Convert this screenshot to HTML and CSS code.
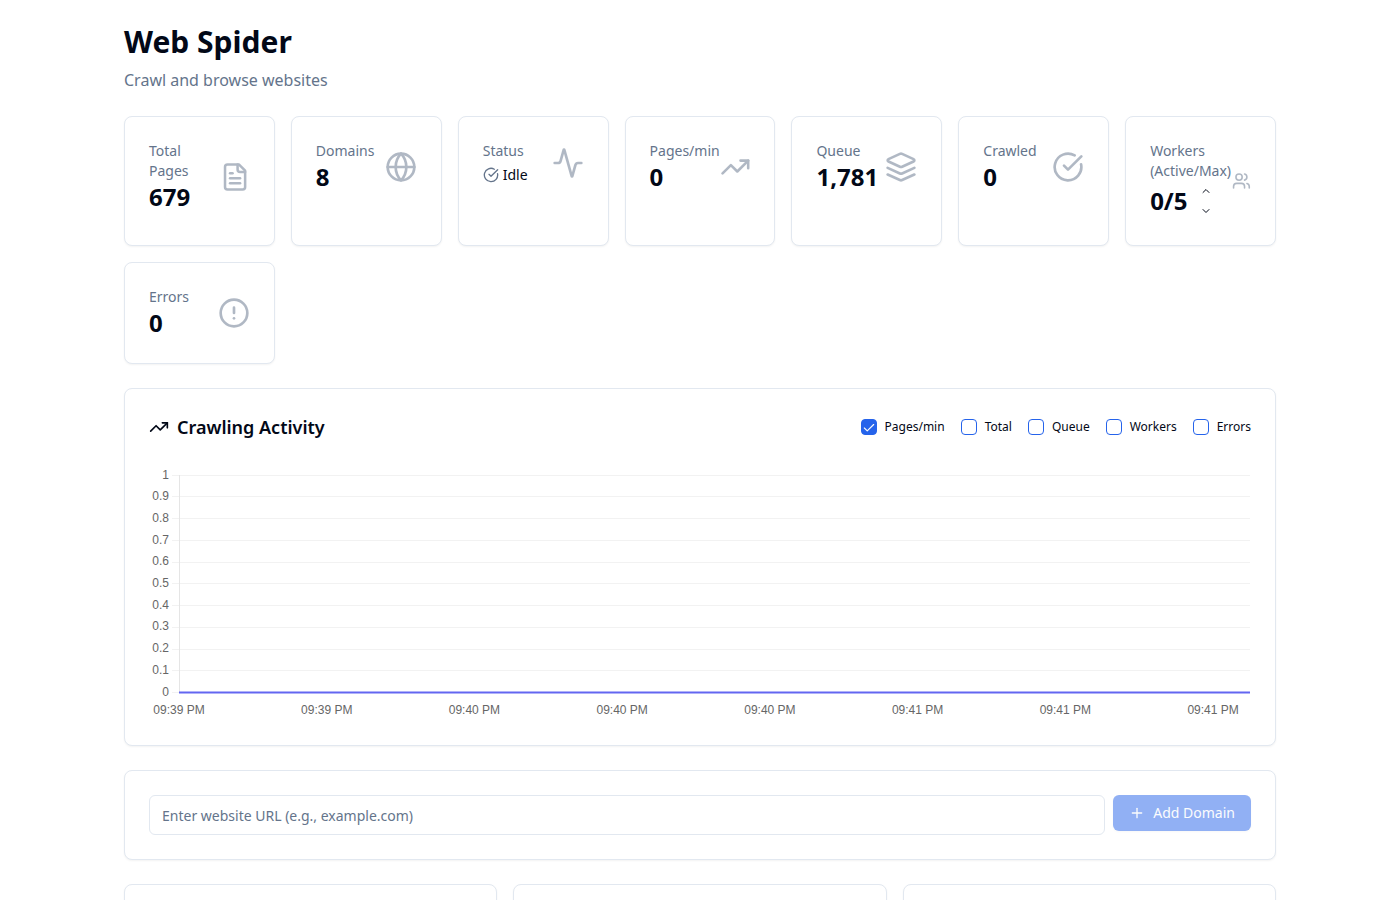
FILE: index.html
```
<!DOCTYPE html>
<html lang="en">
<head>
    <meta charset="UTF-8">
    <meta name="viewport" content="width=device-width, initial-scale=1.0">
    <title>Web Spider</title>
    <link rel="stylesheet" href="styles.css">
</head>
<body>
    <main class="container">
        <h1>Web Spider</h1>
        <p class="subtitle">Crawl and browse websites</p>

        <!-- Stats -->
        <section class="stats">
            <div class="card">
                <div class="stat">
                    <div>
                        <p class="stat-label">Total Pages</p>
                        <p class="stat-value">679</p>
                    </div>
                    <svg class="icon stat-icon" viewBox="0 0 24 24"><path d="M15 2H6a2 2 0 0 0-2 2v16a2 2 0 0 0 2 2h12a2 2 0 0 0 2-2V7Z"/><path d="M14 2v4a2 2 0 0 0 2 2h4"/><path d="M10 9H8"/><path d="M16 13H8"/><path d="M16 17H8"/></svg>
                </div>
            </div>
            <div class="card">
                <div class="stat">
                    <div>
                        <p class="stat-label">Domains</p>
                        <p class="stat-value">8</p>
                    </div>
                    <svg class="icon stat-icon" viewBox="0 0 24 24"><circle cx="12" cy="12" r="10"/><path d="M12 2a14.5 14.5 0 0 0 0 20 14.5 14.5 0 0 0 0-20"/><path d="M2 12h20"/></svg>
                </div>
            </div>
            <div class="card">
                <div class="stat">
                    <div>
                        <p class="stat-label">Status</p>
                        <p class="status">
                            <svg class="icon" viewBox="0 0 24 24"><path d="M21.801 10A10 10 0 1 1 17 3.335"/><path d="m9 11 3 3L22 4"/></svg>
                            Idle
                        </p>
                    </div>
                    <svg class="icon stat-icon" viewBox="0 0 24 24"><path d="M22 12h-2.48a2 2 0 0 0-1.93 1.46l-2.35 8.36a.25.25 0 0 1-.48 0L9.24 2.18a.25.25 0 0 0-.48 0l-2.35 8.36A2 2 0 0 1 4.49 12H2"/></svg>
                </div>
            </div>
            <div class="card">
                <div class="stat">
                    <div>
                        <p class="stat-label">Pages/min</p>
                        <p class="stat-value">0</p>
                    </div>
                    <svg class="icon stat-icon" viewBox="0 0 24 24"><path d="M22 7l-8.5 8.5-5-5L2 17"/><path d="M16 7h6v6"/></svg>
                </div>
            </div>
            <div class="card">
                <div class="stat">
                    <div>
                        <p class="stat-label">Queue</p>
                        <p class="stat-value">1,781</p>
                    </div>
                    <svg class="icon stat-icon" viewBox="0 0 24 24"><path d="m12.83 2.18a2 2 0 0 0-1.66 0L2.6 6.08a1 1 0 0 0 0 1.83l8.58 3.91a2 2 0 0 0 1.66 0l8.58-3.9a1 1 0 0 0 0-1.83Z"/><path d="m22 17.65-9.17 4.16a2 2 0 0 1-1.66 0L2 17.65"/><path d="m22 12.65-9.17 4.16a2 2 0 0 1-1.66 0L2 12.65"/></svg>
                </div>
            </div>
            <div class="card">
                <div class="stat">
                    <div>
                        <p class="stat-label">Crawled</p>
                        <p class="stat-value">0</p>
                    </div>
                    <svg class="icon stat-icon" viewBox="0 0 24 24"><path d="M21.801 10A10 10 0 1 1 17 3.335"/><path d="m9 11 3 3L22 4"/></svg>
                </div>
            </div>
            <div class="card">
                <div class="stat">
                    <div>
                        <p class="stat-label">Workers (Active/Max)</p>
                        <div class="workers">
                            <p class="stat-value">0/5</p>
                            <div class="stepper">
                                <button type="button" aria-label="Increase workers">
                                    <svg class="icon" viewBox="0 0 24 24"><path d="m18 15-6-6-6 6"/></svg>
                                </button>
                                <button type="button" aria-label="Decrease workers">
                                    <svg class="icon" viewBox="0 0 24 24"><path d="m6 9 6 6 6-6"/></svg>
                                </button>
                            </div>
                        </div>
                    </div>
                    <svg class="icon stat-icon" viewBox="0 0 24 24"><path d="M16 21v-2a4 4 0 0 0-4-4H6a4 4 0 0 0-4 4v2"/><circle cx="9" cy="7" r="4"/><path d="M22 21v-2a4 4 0 0 0-3-3.87"/><path d="M16 3.13a4 4 0 0 1 0 7.75"/></svg>
                </div>
            </div>
            <div class="card">
                <div class="stat">
                    <div>
                        <p class="stat-label">Errors</p>
                        <p class="stat-value">0</p>
                    </div>
                    <svg class="icon stat-icon" viewBox="0 0 24 24"><circle cx="12" cy="12" r="10"/><path d="M12 8v4"/><path d="M12 16h.01"/></svg>
                </div>
            </div>
        </section>

        <!-- Activity chart -->
        <section class="card">
            <div class="chart-header">
                <h2>
                    <svg class="icon" viewBox="0 0 24 24"><path d="M22 7l-8.5 8.5-5-5L2 17"/><path d="M16 7h6v6"/></svg>
                    Crawling Activity
                </h2>
                <div class="series">
                    <label><input type="checkbox" checked> Pages/min</label>
                    <label><input type="checkbox"> Total</label>
                    <label><input type="checkbox"> Queue</label>
                    <label><input type="checkbox"> Workers</label>
                    <label><input type="checkbox"> Errors</label>
                </div>
            </div>
            <div class="chart">
                <svg class="plot" role="img" aria-label="Pages per minute">
                    <g id="grid"></g>
                    <rect class="axis" x="0" y="10" width="1" height="217"/>
                    <line class="data" x1="0" y1="227.5" x2="100%" y2="227.5"/>
                    <g id="times"></g>
                </svg>
            </div>
        </section>

        <!-- Add domain -->
        <form class="card add-form">
            <input type="text" aria-label="Website URL" placeholder="Enter website URL (e.g., example.com)">
            <button type="submit" disabled>
                <svg class="icon" viewBox="0 0 24 24"><path d="M5 12h14"/><path d="M12 5v14"/></svg>
                Add Domain
            </button>
        </form>

        <section class="panels">
            <div class="card"></div>
            <div class="card"></div>
            <div class="card"></div>
        </section>
    </main>
    <script src="chart.js"></script>
</body>
</html>
```
FILE: styles.css
```
* {
    box-sizing: border-box;
    margin: 0;
    padding: 0;
}

body {
    font-family: "Noto Sans", sans-serif;
    font-size: 16px;
    line-height: 24px;
    background-color: #fff;
    color: #020817;
}

button,
input {
    font: inherit;
}

.container {
    max-width: 1200px;
    margin: 0 auto;
    padding: 24px;
}

h1 {
    font-size: 30px;
    line-height: 36px;
    font-weight: 700;
    margin-bottom: 8px;
}

.subtitle {
    color: #64748b;
    margin-bottom: 24px;
}

.icon {
    fill: none;
    stroke: currentColor;
    stroke-width: 2;
    stroke-linecap: round;
    stroke-linejoin: round;
}

.card {
    padding: 24px;
    border: 1px solid #e2e8f0;
    border-radius: 8px;
    background-color: #fff;
    box-shadow: 0 1px 2px rgba(0, 0, 0, 0.05);
}

/* Stats */
.stats {
    display: grid;
    grid-template-columns: repeat(7, minmax(0, 1fr));
    gap: 16px;
    margin-bottom: 24px;
}

.stat {
    display: flex;
    align-items: center;
    justify-content: space-between;
}

.stat-label {
    font-size: 14px;
    line-height: 20px;
    color: #64748b;
}

.stat-value {
    font-size: 24px;
    line-height: 32px;
    font-weight: 700;
}

.stat-icon {
    width: 32px;
    height: 32px;
    color: #64748b;
    opacity: 0.5;
}

.status {
    display: flex;
    align-items: center;
    gap: 4px;
    margin-top: 4px;
    font-size: 14px;
    line-height: 20px;
}

.status .icon {
    width: 16px;
    height: 16px;
    color: #64748b;
}

.workers {
    display: flex;
    align-items: center;
    gap: 8px;
}

.stepper {
    display: flex;
    flex-direction: column;
}

.stepper button {
    display: flex;
    align-items: center;
    height: 20px;
    padding: 0 4px;
    border: none;
    background: none;
    color: inherit;
    cursor: pointer;
}

.stepper .icon {
    width: 12px;
    height: 12px;
}

/* Chart */
.chart-header {
    display: flex;
    align-items: center;
    justify-content: space-between;
    margin-bottom: 24px;
}

h2 {
    display: flex;
    align-items: center;
    gap: 8px;
    font-size: 18px;
    line-height: 28px;
    font-weight: 600;
}

h2 .icon {
    width: 20px;
    height: 20px;
}

.series {
    display: flex;
    gap: 16px;
}

.series label {
    display: flex;
    align-items: center;
    gap: 8px;
    font-size: 12px;
    line-height: 16px;
}

.series input {
    appearance: none;
    width: 16px;
    height: 16px;
    border: 1px solid #2563eb;
    border-radius: 4px;
}

.series input:checked {
    background: #2563eb url("data:image/svg+xml,%3Csvg xmlns='http://www.w3.org/2000/svg' viewBox='0 0 24 24' fill='none' stroke='%23f8fafc' stroke-width='2' stroke-linecap='round' stroke-linejoin='round'%3E%3Cpath d='M20 6 9 17l-5-5'/%3E%3C/svg%3E") 0 1px / 14px no-repeat;
}

.chart {
    display: flex;
    height: 256px;
    padding: 0 1px 0 30px;
}

.plot {
    flex: 1;
    height: 256px;
    overflow: visible;
    font-family: "Liberation Sans", Arial, sans-serif;
    font-size: 12px;
    fill: #666;
}

.plot .gridline {
    fill: #f2f2f2;
}

.plot .axis {
    fill: #e5e5e5;
}

.plot .data {
    stroke: #6366f1;
    stroke-width: 2;
}

/* Add domain */
.add-form {
    display: flex;
    align-items: flex-start;
    gap: 8px;
    margin: 24px 0;
    font-size: 14px;
    line-height: 20px;
}

.add-form input {
    flex: 1;
    height: 40px;
    padding: 8px 12px;
    border: 1px solid #e2e8f0;
    border-radius: 6px;
    background-color: #fff;
}

.add-form input::placeholder {
    color: #64748b;
}

.add-form button {
    display: flex;
    align-items: center;
    gap: 8px;
    height: 36px;
    padding: 0 16px;
    border: none;
    border-radius: 6px;
    background-color: #2563eb;
    color: #f8fafc;
    box-shadow: 0 1px 2px rgba(0, 0, 0, 0.05);
}

.add-form button:disabled {
    opacity: 0.5;
}

.add-form .icon {
    width: 16px;
    height: 16px;
}

.panels {
    display: grid;
    grid-template-columns: repeat(3, 1fr);
    gap: 16px;
}

.panels .card {
    min-height: 240px;
}
```
FILE: chart.js
```
const svgNS = "http://www.w3.org/2000/svg";
const grid = document.getElementById("grid");
const times = document.getElementById("times");

function add(parent, tag, attrs, text) {
    const el = document.createElementNS(svgNS, tag);
    for (const key in attrs) {
        el.setAttribute(key, attrs[key]);
    }
    if (text) {
        el.textContent = text;
    }
    parent.appendChild(el);
}

// Horizontal lines and y labels, from 1 down to 0
const tops = [10, 31, 53, 75, 97, 118, 140, 162, 184, 205, 227];
tops.forEach(function (y, i) {
    add(grid, "rect", { class: "gridline", x: -7, y: y, width: 7, height: 1 });
    add(grid, "rect", { class: "gridline", x: 0, y: y, width: "100%", height: 1 });
    add(grid, "text", { x: -10, y: Math.floor(14 + i * 21.7), "text-anchor": "end" }, String((10 - i) / 10));
});

// A label on every fourth of the 30 samples
const labels = ["09:39 PM", "09:39 PM", "09:40 PM", "09:40 PM", "09:40 PM", "09:41 PM", "09:41 PM", "09:41 PM"];
labels.forEach(function (label, i) {
    add(times, "text", { x: (i * 4 / 29 * 100) + "%", y: 249, "text-anchor": "middle" }, label);
});
```
